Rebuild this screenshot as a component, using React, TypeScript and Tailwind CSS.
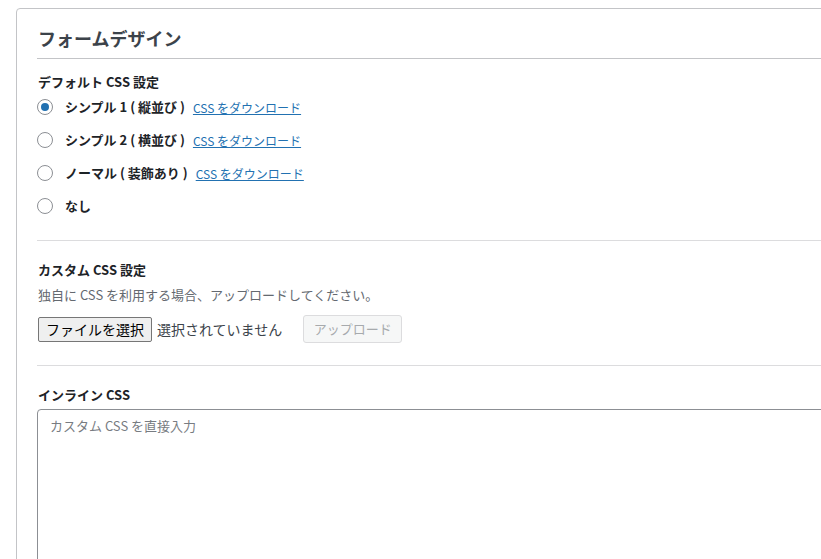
import React from "react";

const font = {
  fontFamily: '"Noto Sans CJK JP", "Noto Sans", sans-serif',
};

type Option = { label: string; link?: boolean; checked?: boolean };

const options: Option[] = [
  { label: "シンプル 1 ( 縦並び )", link: true, checked: true },
  { label: "シンプル 2 ( 横並び )", link: true },
  { label: "ノーマル ( 装飾あり )", link: true },
  { label: "なし" },
];

const Radio = ({ checked }: { checked?: boolean }) => (
  <span className="flex h-4 w-4 shrink-0 items-center justify-center rounded-full border border-[#8c8f94] bg-white">
    {checked && <span className="h-2 w-2 rounded-full bg-[#2271b1]" />}
  </span>
);

export default function App() {
  return (
    <div
      className="h-[559px] w-[821px] overflow-hidden bg-white text-[#1d2327]"
      style={font}
    >
      <div className="ml-4 mt-2 w-[860px] rounded-tl rounded-tr border border-[#c3c4c7] pl-5">
        <h2 className="border-b border-[#c3c4c7] pb-[10px] pl-px pt-[19px] text-[18px] font-bold leading-5 text-[#3c434a]">
          フォームデザイン
        </h2>

        <section className="pt-[15px]">
          <h3 className="pl-px text-[13px] font-bold leading-4">
            デフォルト CSS 設定
          </h3>
          <div className="flex flex-col">
            {options.map((o) => (
              <label key={o.label} className="flex h-[33px] items-center">
                <Radio checked={o.checked} />
                <span className="ml-3 text-[13px] font-bold">{o.label}</span>
                {o.link && (
                  <a className="ml-2 mt-[3px] text-[12px] text-[#2271b1] underline">
                    CSS をダウンロード
                  </a>
                )}
              </label>
            ))}
          </div>
        </section>

        <hr className="mt-[18px] border-[#dcdcde]" />

        <section className="pt-[21px]">
          <h3 className="pl-px text-[13px] font-bold leading-4">
            カスタム CSS 設定
          </h3>
          <p className="mt-2 pl-px text-[13px] leading-[18px] text-[#646970]">
            独自に CSS を利用する場合、アップロードしてください。
          </p>
          <div className="mt-[11px] flex h-[28px] items-center">
            <button className="ml-px h-[25px] rounded-[2px] border border-[#767676] bg-[#efefef] px-[7px] text-[14px] leading-none text-black">
              ファイルを選択
            </button>
            <span className="ml-[5px] text-[14px] text-[#3c434a]">
              選択されていません
            </span>
            <button className="ml-[21px] h-[28px] w-[99px] rounded-[3px] border border-[#dcdcde] bg-[#f6f7f7] text-[13px] text-[#a7aaad]">
              アップロード
            </button>
          </div>
        </section>

        <hr className="mt-[22px] border-[#dcdcde]" />

        <section className="pt-[21px]">
          <h3 className="pl-px text-[13px] font-bold leading-4">
            インライン CSS
          </h3>
          <textarea
            className="mt-[6px] block h-[200px] w-full rounded border border-[#8c8f94] px-3 pb-2 pt-[6px] text-[13px] leading-5 placeholder:text-[#787c82]"
            placeholder="カスタム CSS を直接入力"
          />
        </section>
      </div>
    </div>
  );
}
